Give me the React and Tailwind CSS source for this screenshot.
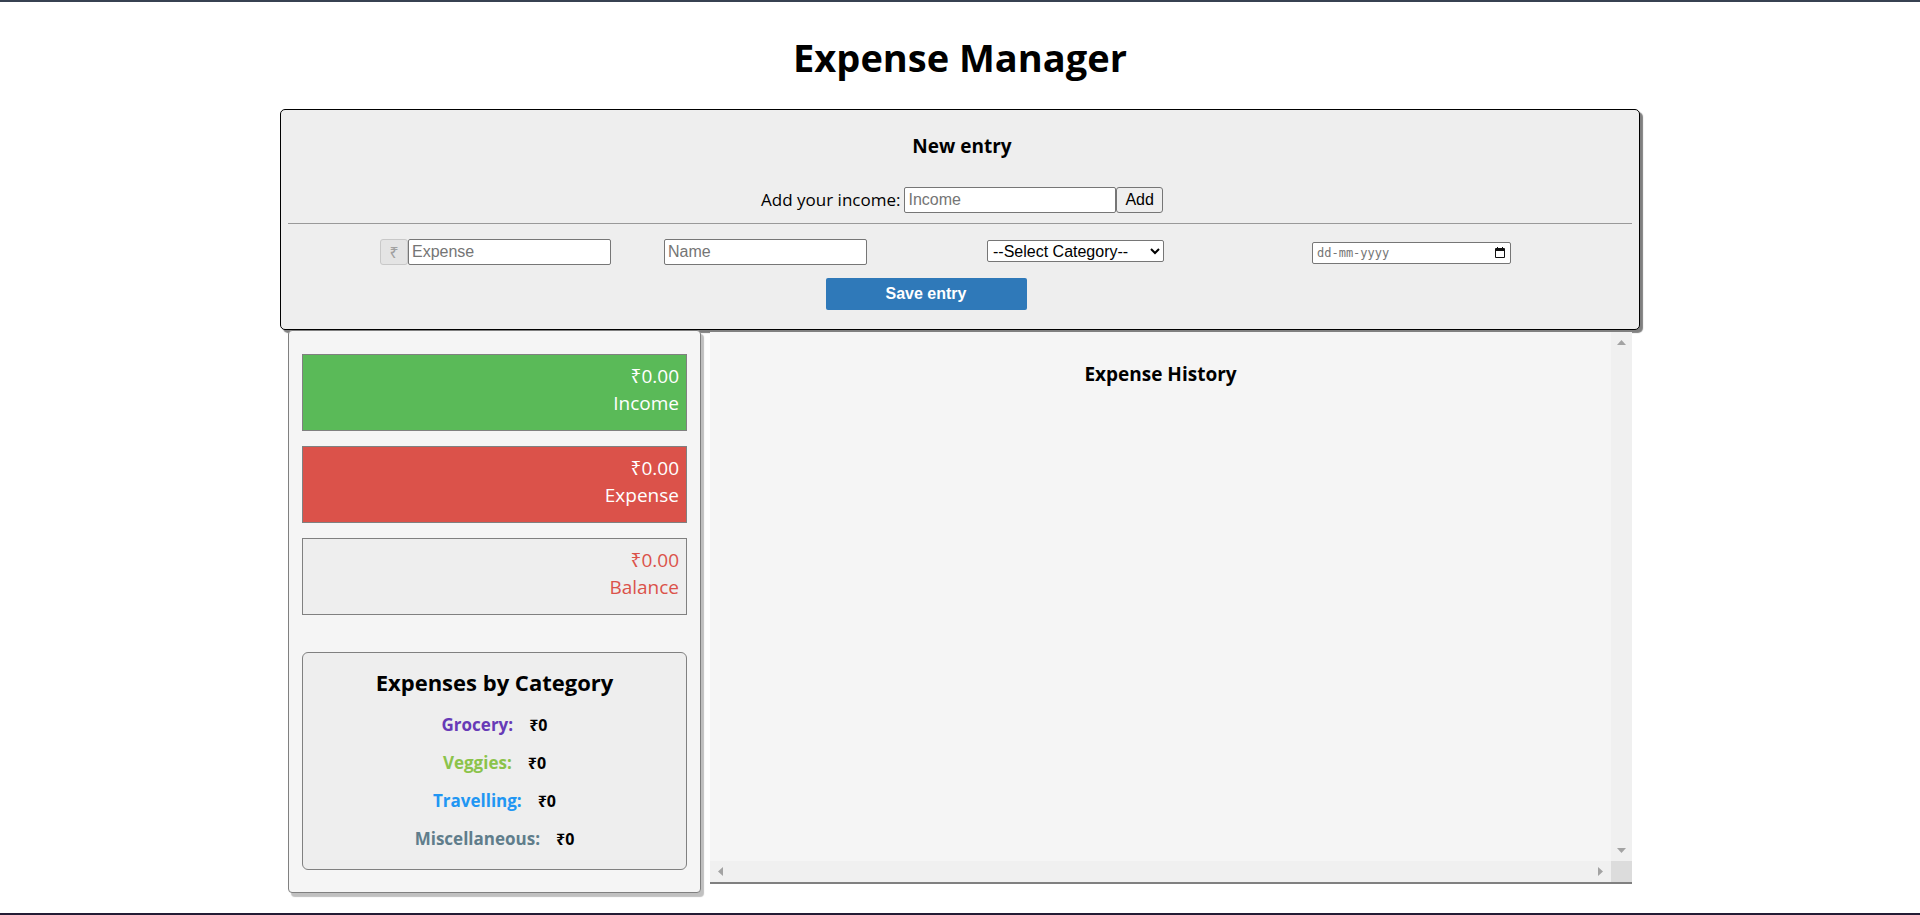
const stats = [
  { label: "Income", tone: "bg-[#5aba58] text-white" },
  { label: "Expense", tone: "bg-[#db524a] text-white" },
  { label: "Balance", tone: "bg-[#eeeeee] text-[#db524a]" },
];

const categories = [
  { label: "Grocery:", tone: "text-[#673ab7]" },
  { label: "Veggies:", tone: "text-[#8bc34a]" },
  { label: "Travelling:", tone: "text-[#2196f3]" },
  { label: "Miscellaneous:", tone: "text-[#607d8b]" },
];

const field =
  "h-[26px] min-w-0 rounded-[2px] border border-[#767676] bg-white px-[3px] font-['Liberation_Sans',sans-serif] text-base text-black placeholder:text-[#757575]";

function Arrow({ points, label }) {
  return (
    <button type="button" aria-label={label} className="flex size-[21px] items-center justify-center">
      <svg width="11" height="11" viewBox="0 0 11 11" fill="#a3a3a3" aria-hidden="true">
        <polygon points={points} />
      </svg>
    </button>
  );
}

function EntryForm() {
  return (
    <section className="relative rounded-[5px] border border-black bg-[#eeeeee] px-[7px] pb-[19px] shadow-[3px_3px_1px_#808080]">
      <h2 className="pt-[22px] pl-1 text-center text-[19px] leading-7 font-bold">New entry</h2>
      <form className="mt-[27px] flex items-center justify-center pl-1">
        <label htmlFor="income" className="mr-1 text-[17px] leading-6">
          Add your income:
        </label>
        <input id="income" placeholder="Income" className={field + " w-[212px]"} />
        <button
          type="button"
          className="h-[26px] rounded-[3px] border border-[#767676] bg-[#efefef] px-2 font-['Liberation_Sans',sans-serif] text-base leading-6"
        >
          Add
        </button>
      </form>
      <hr className="mt-[10px] border-[#999999]" />
      <form>
        <div className="mt-[15px] grid grid-cols-[284fr_323fr_325fr_320fr] items-center pl-[92px]">
          <div className="flex">
            <button
              type="button"
              disabled
              className="h-[26px] w-7 rounded-[3px] border border-[#c8c8c8] bg-[#e4e4e4] text-base leading-6 text-[#a0a0a0]"
            >
              ₹
            </button>
            <input aria-label="Expense" placeholder="Expense" className={field + " w-[203px]"} />
          </div>
          <input aria-label="Name" placeholder="Name" className={field + " w-[203px]"} />
          <select
            aria-label="Category"
            className="mb-[2px] h-[22px] w-[177px] rounded-[2px] border border-[#767676] bg-white pl-px font-['Liberation_Sans',sans-serif] text-base leading-5"
          >
            <option>--Select Category--</option>
            <option>Grocery</option>
            <option>Veggies</option>
            <option>Travelling</option>
            <option>Miscellaneous</option>
          </select>
          <div className="mt-[2px] flex h-[22px] w-[199px] items-center rounded-[2px] border border-[#767676] bg-white px-1">
            <input
              aria-label="Date"
              placeholder="dd-mm-yyyy"
              className="min-w-0 flex-1 font-['DejaVu_Sans_Mono',monospace] text-xs outline-none placeholder:text-[#757575]"
            />
            <button type="button" aria-label="Open calendar">
              <svg width="12" height="12" viewBox="0 0 12 12" aria-hidden="true">
                <path d="M2 1h1V0h1v1h4V0h1v1h1a1 1 0 0 1 1 1v8a1 1 0 0 1-1 1H2a1 1 0 0 1-1-1V2a1 1 0 0 1 1-1Zm0 3v6h8V4Z" fill="#111" fillRule="evenodd" />
              </svg>
            </button>
          </div>
        </div>
        <div className="mt-[13px] flex justify-center pr-[68px]">
          <button
            type="button"
            className="h-8 w-[201px] rounded-[2px] bg-[#2f79b9] font-['Liberation_Sans',sans-serif] text-base font-bold text-white"
          >
            Save entry
          </button>
        </div>
      </form>
    </section>
  );
}

function Summary() {
  return (
    <aside className="relative w-[413px] shrink-0 rounded-[4px] border border-[#808080] bg-[#f5f5f5] px-[13px] pt-[23px] pb-[22px] shadow-[3px_4px_1px_#c0c0c0]">
      <div className="flex flex-col gap-[15px]">
        {stats.map(({ label, tone }) => (
          <div key={label} className={"h-[77px] border border-[#808080] px-[7px] pt-2 text-right text-[19px] leading-[27px] " + tone}>
            <p>₹0.00</p>
            <p>{label}</p>
          </div>
        ))}
      </div>
      <section className="mt-[37px] rounded-[6px] border border-[#808080] bg-[#eeeeee] px-4 pt-[13px] pb-[11px] text-center">
        <h2 className="mb-2 text-[22px] leading-8 font-bold">Expenses by Category</h2>
        <ul>
          {categories.map(({ label, tone }) => (
            <li key={label} className="flex h-[38px] items-center justify-center gap-4 font-bold">
              <span className={"text-[17px] " + tone}>{label}</span>
              <span className="text-base">₹0</span>
            </li>
          ))}
        </ul>
      </section>
    </aside>
  );
}

function History() {
  return (
    <section className="relative mt-[2px] grid h-[550px] min-w-0 flex-1 grid-cols-[1fr_21px] grid-rows-[1fr_21px] bg-[#f5f5f5] shadow-[0_2px_0_#808080]">
      <h2 className="pt-7 text-center text-[19px] leading-7 font-bold">Expense History</h2>
      <div className="flex flex-col justify-between bg-[#f0f0f0]">
        <Arrow label="Scroll up" points="1,8 10,8 5.5,3" />
        <Arrow label="Scroll down" points="1,3 10,3 5.5,8" />
      </div>
      <div className="flex justify-between bg-[#f0f0f0]">
        <Arrow label="Scroll left" points="8,1 8,10 3,5.5" />
        <Arrow label="Scroll right" points="3,1 3,10 8,5.5" />
      </div>
      <div className="bg-[#dcdcdc]" />
    </section>
  );
}

export default function App() {
  return (
    <div className="flex min-h-screen flex-col border-t-2 border-b-2 border-t-[#374151] border-b-[#241c35] bg-white font-['Open_Sans','Noto_Sans',sans-serif] text-black">
      <main className="px-[280px] pb-[19px]">
        <h1 className="pt-[27px] pb-6 text-center text-[38px] leading-[56px] font-bold">Expense Manager</h1>
        <EntryForm />
        <div className="flex items-start gap-[9px] px-2">
          <Summary />
          <History />
        </div>
      </main>
    </div>
  );
}
